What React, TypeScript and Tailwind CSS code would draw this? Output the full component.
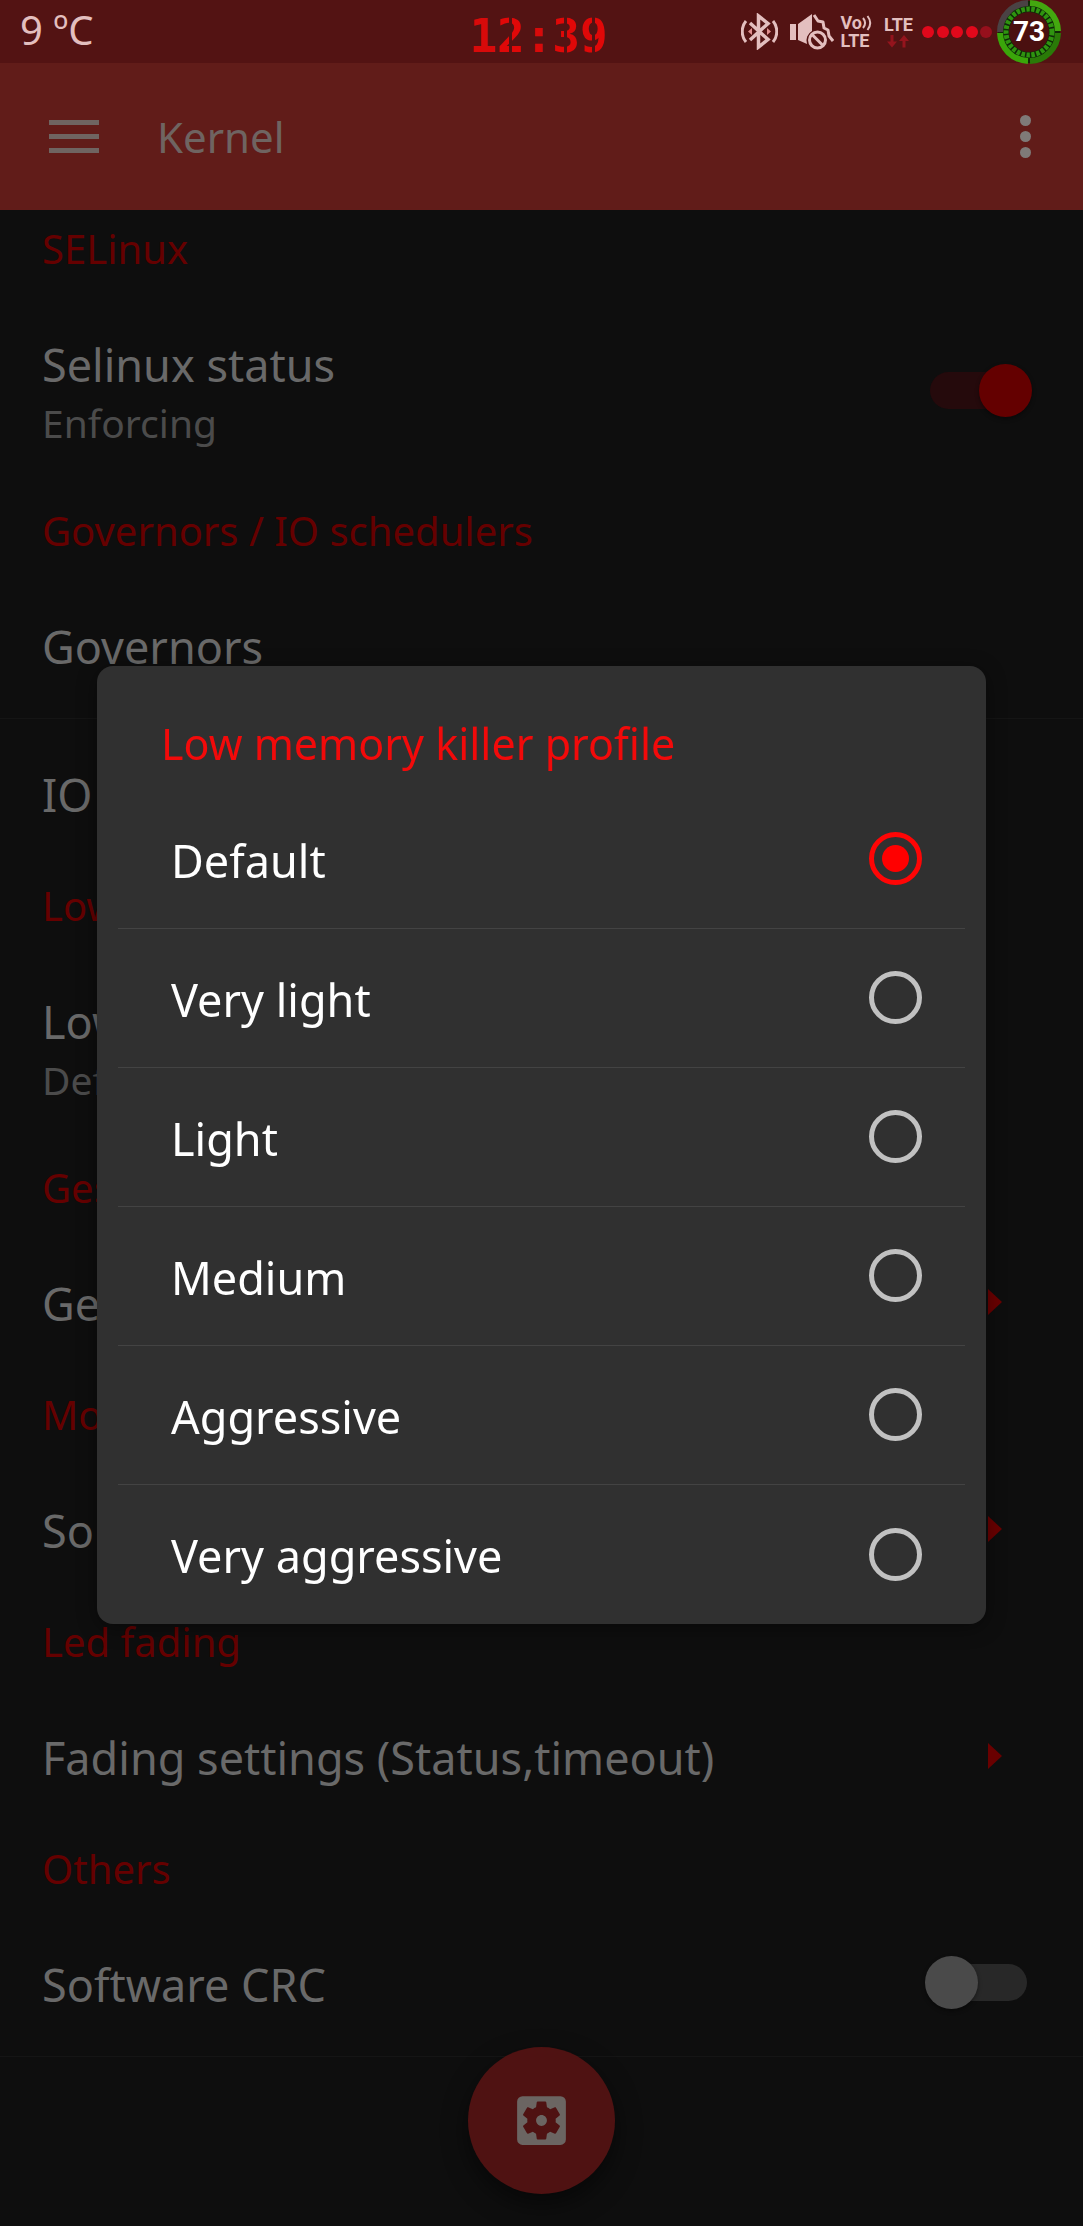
import { useState } from "react";
import { MdSettingsApplications } from "react-icons/md";

type Item = {
  title: string;
  summary?: string;
  control?: "switch" | "arrow";
  checked?: boolean;
  divider?: boolean;
};

type Section = { heading: string; items: Item[] };

const sections: Section[] = [
  {
    heading: "SELinux",
    items: [{ title: "Selinux status", summary: "Enforcing", control: "switch", checked: true }],
  },
  {
    heading: "Governors / IO schedulers",
    items: [{ title: "Governors", divider: true }, { title: "IO schedulers" }],
  },
  {
    heading: "Low memory killer",
    items: [{ title: "Low memory killer profile", summary: "Default" }],
  },
  { heading: "Gestures", items: [{ title: "Gesture settings", control: "arrow" }] },
  { heading: "Modules", items: [{ title: "Sound", control: "arrow" }] },
  {
    heading: "Led fading",
    items: [{ title: "Fading settings (Status,timeout)", control: "arrow" }],
  },
  { heading: "Others", items: [{ title: "Software CRC", control: "switch", divider: true }] },
];

const profiles = ["Default", "Very light", "Light", "Medium", "Aggressive", "Very aggressive"];

function BluetoothIcon() {
  return (
    <svg viewBox="0 0 37 37" className="h-[37px] w-[37px]" fill="none" stroke="#e3bfbf" strokeWidth="3.500">
      <path d="M9 10 27 26.500 17.500 34V3L27 10.500 9 27" />
      <path d="M5 8C0 14 0 23 5 29M32 8c5 6 5 15 0 21" strokeWidth="3" />
      <path d="M7 18.500l4-3.500v7zM30 18.500l-4-3.500v7z" fill="#e08f8f" stroke="none" />
    </svg>
  );
}

function MuteIcon() {
  return (
    <svg viewBox="0 0 44 37" className="h-[37px] w-[44px]">
      <path d="M0 11h6v16H0zM8 11 22 1v17a11 11 0 0 0-5 13L8 27z" fill="#e3bfbf" />
      <path
        d="M24 2l4 6 5 1 1 6 4 2 1 6 4 5"
        fill="none"
        stroke="#e3bfbf"
        strokeWidth="3"
        strokeLinejoin="round"
      />
      <circle cx="27.500" cy="27" r="8" fill="#531313" stroke="#e3bfbf" strokeWidth="3" />
      <path d="M22 21.500l11 11" stroke="#e3bfbf" strokeWidth="3" />
    </svg>
  );
}

function CallWaves() {
  return (
    <svg viewBox="0 0 10 16" className="h-4 w-2.5" fill="none" stroke="#e3bfbf" strokeWidth="2">
      <path d="M1 3c2.500 3 2.500 7 0 10M5.500 1c3.500 4.500 3.500 9.500 0 14" />
    </svg>
  );
}

function DataArrows() {
  return (
    <svg viewBox="0 0 22 14" className="h-3.5 w-[22px]" fill="#94141d">
      <path d="M3.500 1h3v6.500H10L5 13.500 0 7.500h3.500zM15.500 13.500h3V7H22L17 1l-5 6h3.500z" />
    </svg>
  );
}

function SignalDots() {
  return (
    <svg viewBox="0 0 72 14" className="h-3.5 w-[72px]">
      {[7, 22, 36, 51, 65].map((x, i) => (
        <circle key={x} cx={x} cy="7" r="6" fill={i < 4 ? "#e1081b" : "#96101c"} />
      ))}
    </svg>
  );
}

function Battery() {
  return (
    <div className="relative flex size-16 items-center justify-center">
      <svg viewBox="0 0 64 64" className="absolute inset-0 size-16" fill="none">
        <circle cx="32" cy="32" r="31" fill="#0f2a08" />
        <path d="M3 32A29 29 0 0 1 31 3" stroke="#4a4244" strokeWidth="6" />
        <path d="M33 3A29 29 0 0 1 61 31" stroke="#43a80f" strokeWidth="6" />
        <path d="M61 33A29 29 0 0 1 33 61" stroke="#2a7a08" strokeWidth="6" />
        <path d="M31 61A29 29 0 0 1 3 33" stroke="#3aa60a" strokeWidth="6" />
        <circle cx="32" cy="32" r="23" stroke="#2f9410" strokeWidth="5" strokeDasharray="3.500 1.500" />
        <circle cx="32" cy="32" r="20" fill="#4a1010" />
      </svg>
      <span className="relative font-['Roboto',sans-serif] text-[28px] leading-none font-bold text-white">73</span>
    </div>
  );
}

function StatusBar() {
  const stencil =
    "bg-[linear-gradient(90deg,#e00808_42%,transparent_42%,transparent_53%,#e00808_53%)] bg-clip-text text-transparent";
  return (
    <header className="relative flex h-[63px] items-center justify-between bg-[#531313] pr-[22px] pl-5">
      <span className="pb-1 text-[40px] leading-[56px] text-[#e3bfbf]">9 ºC</span>
      <div className="absolute inset-0 flex items-center justify-center pt-2 pr-1.5 font-['DejaVu_Sans_Mono',monospace] text-[46px] leading-none font-bold text-[#d80a0a]">
        <span>1</span>
        <span className={stencil}>2</span>
        <span>:</span>
        <span className={stencil}>3</span>
        <span className={stencil}>9</span>
      </div>
      <div className="relative flex items-center font-['Roboto',sans-serif] text-[18px] leading-[18px] font-bold text-[#e3bfbf]">
        <BluetoothIcon />
        <div className="ml-3">
          <MuteIcon />
        </div>
        <div className="ml-1.5 flex flex-col">
          <span className="flex items-center">
            Vo
            <CallWaves />
          </span>
          <span>LTE</span>
        </div>
        <div className="ml-3 flex flex-col items-center">
          <span>LTE</span>
          <DataArrows />
        </div>
        <div className="ml-2">
          <SignalDots />
        </div>
        <div className="ml-1">
          <Battery />
        </div>
      </div>
    </header>
  );
}

function Toolbar() {
  return (
    <div className="flex h-[147px] items-center bg-[#611c19] pr-[52px] pl-[49px]">
      <button type="button" aria-label="Open menu" className="flex w-[50px] flex-col gap-[9px]">
        <span className="h-[5px] bg-[#6f6461]" />
        <span className="h-[5px] bg-[#6f6461]" />
        <span className="h-[5px] bg-[#6f6461]" />
      </button>
      <h1 className="ml-[58px] flex-1 text-[42px] leading-[60px] text-[#6f6461]">Kernel</h1>
      <button type="button" aria-label="More options" className="flex flex-col gap-[5px]">
        <span className="size-[11px] rounded-full bg-[#7f7a78]" />
        <span className="size-[11px] rounded-full bg-[#7f7a78]" />
        <span className="size-[11px] rounded-full bg-[#7f7a78]" />
      </button>
    </div>
  );
}

function Switch({ id, initial }: { id: string; initial: boolean }) {
  const [on, setOn] = useState(initial);
  return (
    <span className="relative mr-[51px] flex h-[53px] w-[107px] items-center">
      <input
        id={id}
        type="checkbox"
        role="switch"
        checked={on}
        onChange={() => setOn(!on)}
        className="peer mx-[5px] h-[37px] w-full appearance-none rounded-full bg-[#282828] checked:bg-[#250a0c]"
      />
      <span className="pointer-events-none absolute top-0 left-0 size-[53px] rounded-full bg-[#4a4a4a] shadow-[0_2px_4px_rgba(0,0,0,0.4)] peer-checked:right-0 peer-checked:left-auto peer-checked:bg-[#640000]" />
    </span>
  );
}

function Row({ item }: { item: Item }) {
  const id = item.title.toLowerCase().replace(/[^a-z]+/g, "-");
  const height = item.summary ? "h-[203px]" : "h-[148px]";
  const border = item.divider ? "border-b border-[#151515]" : "";
  const text = (
    <span className="flex flex-1 flex-col pt-1 text-left">
      <span className="text-[45px] leading-[60px] text-[#696969]">{item.title}</span>
      {item.summary && <span className="text-[39px] leading-[56px] text-[#4b4b4b]">{item.summary}</span>}
    </span>
  );
  const layout = `flex w-full items-center pl-[42px] ${height} ${border}`;
  if (item.control === "switch") {
    return (
      <label htmlFor={id} className={layout}>
        {text}
        <Switch id={id} initial={!!item.checked} />
      </label>
    );
  }
  return (
    <button type="button" className={layout}>
      {text}
      {item.control === "arrow" && (
        <svg viewBox="0 0 14 26" className="mr-[81px] h-[26px] w-3.5" fill="#690000">
          <path d="M0 0 14 13 0 26z" />
        </svg>
      )}
    </button>
  );
}

function ProfileDialog() {
  const [selected, setSelected] = useState("Default");
  return (
    <div className="fixed inset-x-0 top-[63px] bottom-0 flex items-center justify-center px-[97px]">
      <div
        role="dialog"
        aria-labelledby="dialog-title"
        className="w-full rounded-2xl bg-[#303030] shadow-[0_4px_20px_rgba(0,0,0,0.4)]"
      >
        <h2 id="dialog-title" className="px-16 pt-12 pb-4 text-[43px] leading-[60px] text-[#f20a0a]">
          Low memory killer profile
        </h2>
        <div role="radiogroup" aria-labelledby="dialog-title" className="divide-y divide-[#434343] px-[21px]">
          {profiles.map((name) => (
            <label key={name} className="flex h-[139px] items-center justify-between pr-[43px] pl-[53px]">
              <span className="pt-1 text-[45px] leading-[60px] text-white">{name}</span>
              <input
                type="radio"
                name="profile"
                value={name}
                checked={selected === name}
                onChange={() => setSelected(name)}
                className="flex size-[53px] appearance-none items-center justify-center rounded-full border-[5px] border-[#c1c1c1] checked:border-[#ff0505] checked:before:size-[27px] checked:before:rounded-full checked:before:bg-[#ff0000]"
              />
            </label>
          ))}
        </div>
      </div>
    </div>
  );
}

export default function App() {
  return (
    <div className="min-h-screen bg-[#0e0e0e] font-['Noto_Sans',sans-serif]">
      <StatusBar />
      <Toolbar />
      <main>
        {sections.map((section) => (
          <section key={section.heading}>
            <h2 className="h-[79px] pt-[11px] pl-[42px] text-[40px] leading-[56px] text-[#650000]">
              {section.heading}
            </h2>
            {section.items.map((item) => (
              <Row key={item.title} item={item} />
            ))}
          </section>
        ))}
      </main>
      <div className="fixed inset-x-0 bottom-8 flex justify-center">
        <button
          type="button"
          aria-label="Kernel settings"
          className="flex size-[147px] items-center justify-center rounded-full bg-[#4f1212] shadow-[0_10px_24px_rgba(0,0,0,0.5)]"
        >
          <MdSettingsApplications className="size-[65px] text-[#6b6562]" />
        </button>
      </div>
      <ProfileDialog />
    </div>
  );
}
